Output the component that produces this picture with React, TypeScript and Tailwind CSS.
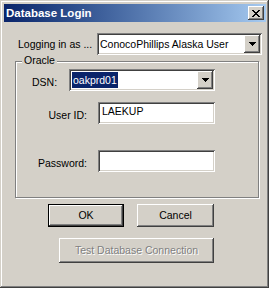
import React from 'react';

const raised =
  'shadow-[inset_-1px_-1px_#404040,inset_1px_1px_#ffffff,inset_-2px_-2px_#808080,inset_2px_2px_#d4d0c8]';
const sunken =
  'shadow-[inset_1px_1px_#808080,inset_-1px_-1px_#ffffff,inset_2px_2px_#404040,inset_-2px_-2px_#d4d0c8]';

function CloseGlyph() {
  // Marlett-style 8x7 cross
  const rows = ['XX....XX', '.XX..XX.', '..XXXX..', '...XX...', '..XXXX..', '.XX..XX.', 'XX....XX'];
  return (
    <svg width="8" height="7" viewBox="0 0 8 7" shapeRendering="crispEdges">
      {rows.map((r, y) =>
        r.split('').map((c, x) => (c === 'X' ? <rect key={`${x}-${y}`} x={x} y={y} width="1" height="1" fill="#000" /> : null)),
      )}
    </svg>
  );
}

function ArrowBtn() {
  return (
    <div className={`flex h-full w-[16px] shrink-0 items-center justify-center bg-[#d4d0c8] ${raised}`}>
      <svg width="7" height="4" viewBox="0 0 7 4" shapeRendering="crispEdges">
        <rect x="0" y="0" width="7" height="1" fill="#000" />
        <rect x="1" y="1" width="5" height="1" fill="#000" />
        <rect x="2" y="2" width="3" height="1" fill="#000" />
        <rect x="3" y="3" width="1" height="1" fill="#000" />
      </svg>
    </div>
  );
}

export default function App() {
  return (
    <div
      className={`flex h-[288px] w-[269px] flex-col bg-[#d4d0c8] pt-[4px] pl-[4px] pr-[3px] font-['Liberation_Sans',Arial,sans-serif] text-[10.5px] leading-[13px] text-black shadow-[inset_-1px_-1px_#404040,inset_1px_1px_#d4d0c8,inset_-2px_-2px_#808080,inset_2px_2px_#ffffff]`}
    >
      {/* Title bar */}
      <div className="flex h-[18px] shrink-0 items-center bg-linear-to-r from-[#0a246a] to-[#a6caf0] pl-[2px] pr-[2px]">
        <span className="text-[11.5px] font-bold text-white">Database Login</span>
        <div className={`ml-auto flex h-[14px] w-[16px] items-center justify-center bg-[#d4d0c8] ${raised}`}>
          <CloseGlyph />
        </div>
      </div>

      {/* Logging in as */}
      <div className="mt-[11px] flex h-[22px] shrink-0 items-center">
        <span className="w-[93px] shrink-0 whitespace-nowrap pl-[14px]">Logging in as ...</span>
        <div className={`flex h-[22px] w-[165px] shrink-0 items-center bg-white p-[2px] ${sunken}`}>
          <span className="flex-1 whitespace-nowrap pl-[1px]">ConocoPhillips Alaska User</span>
          <ArrowBtn />
        </div>
      </div>

      {/* Oracle group */}
      <div className="relative mt-[6px] ml-[11px] flex h-[137px] w-[244px] shrink-0 flex-col border border-[#808080] shadow-[1px_1px_#ffffff,inset_1px_1px_#ffffff]">
        <span className="absolute top-[-8px] left-[6px] bg-[#d4d0c8] px-[2px]">Oracle</span>

        <div className="mt-[7px] flex h-[22px] items-center">
          <span className="mt-[5px] w-[53px] shrink-0 pl-[16px]">DSN:</span>
          <div className={`flex h-[22px] w-[146px] shrink-0 items-center bg-white p-[2px] ${sunken}`}>
            <div className="flex-1">
              <span className="ml-[1px] inline-block h-[16px] bg-[#0a246a] px-[1px] leading-[16px] text-white">oakprd01</span>
            </div>
            <ArrowBtn />
          </div>
        </div>

        <div className="mt-[11px] flex h-[22px] items-center">
          <span className="mt-[5px] w-[82px] shrink-0 whitespace-nowrap pr-[11px] text-right">User ID:</span>
          <div className={`flex h-[22px] w-[117px] shrink-0 items-center bg-white pb-[4px] pl-[4px] ${sunken}`}>LAEKUP</div>
        </div>

        <div className="mt-[26px] flex h-[22px] items-center">
          <span className="mt-[5px] w-[82px] shrink-0 whitespace-nowrap pr-[11px] text-right">Password:</span>
          <div className={`h-[22px] w-[117px] shrink-0 bg-white ${sunken}`} />
        </div>
      </div>

      {/* Buttons */}
      <div className="mt-[6px] flex shrink-0">
        <div className="ml-[44px] h-[23px] w-[76px] border border-black">
          <div className={`flex h-full w-full items-center justify-center bg-[#d4d0c8] ${raised}`}>OK</div>
        </div>
        <div className={`ml-[13px] flex h-[23px] w-[77px] items-center justify-center bg-[#d4d0c8] ${raised}`}>Cancel</div>
      </div>

      <div
        className={`mt-[11px] ml-[55px] flex h-[25px] w-[155px] shrink-0 items-center justify-center bg-[#d4d0c8] text-[#808080] [text-shadow:1px_1px_#ffffff] ${raised}`}
      >
        Test Database Connection
      </div>
    </div>
  );
}
